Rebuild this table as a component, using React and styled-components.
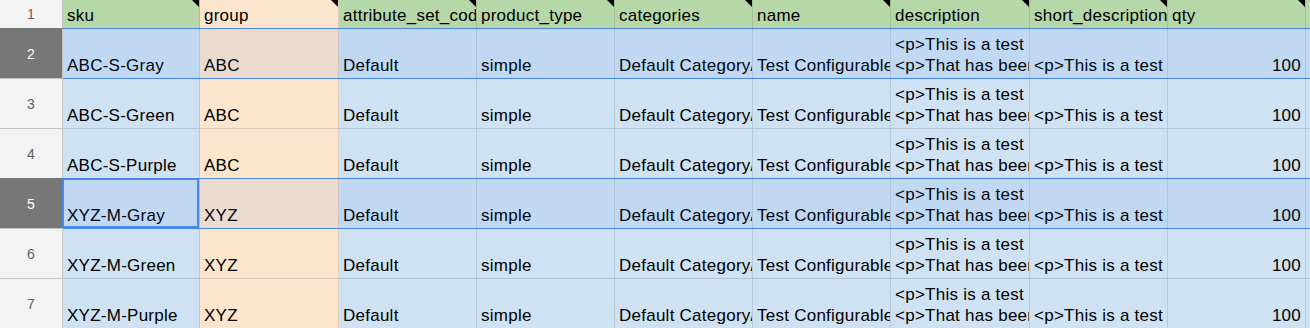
import React from 'react';
import styled, { createGlobalStyle, css } from 'styled-components';

const GlobalStyle = createGlobalStyle`
  body {
    margin: 0;
    background: #ffffff;
    overflow: hidden;
  }
`

const Sheet = styled.div`
  display: flex;
  flex-direction: column;
  width: 1310px;
  font-family: "Liberation Sans", Arial, sans-serif;
  font-size: 17px;
  color: #000;
`

const Row = styled.div`
  display: flex;
  height: ${p => p.$height}px;
  position: relative;
  ${p => p.$selected && css`
    &::after {
      content: '';
      position: absolute;
      left: 63px;
      right: 0;
      top: -1px;
      bottom: 0;
      border-top: 1px solid #4a86e8;
      border-bottom: 1px solid #4a86e8;
      background: rgba(26, 100, 232, 0.08);
      pointer-events: none;
    }
  `}
`

const RowNum = styled.div`
  width: 63px;
  flex: none;
  box-sizing: border-box;
  display: flex;
  align-items: center;
  justify-content: center;
  font-size: 14px;
  color: ${p => (p.$selected ? '#ffffff' : '#616161')};
  background: ${p => (p.$selected ? '#777777' : '#f3f3f3')};
  border-right: 1px solid #c4c4c4;
  border-bottom: 1px solid #c4c4c4;
  ${p => p.$selected && css`
    box-shadow: 0 -1px 0 #777777;
  `}
`

const tones = {
  green: '#b6d7a8',
  peach: '#fce5cd',
  blue: '#cfe2f3',
}

const Cell = styled.div`
  width: ${p => (p.$width ? `${p.$width}px` : 'auto')};
  flex: ${p => (p.$width ? 'none' : '1')};
  box-sizing: border-box;
  position: relative;
  display: flex;
  flex-direction: column;
  justify-content: flex-end;
  padding: 0 ${p => (p.$align === 'right' ? 4 : 0)}px 2px 4px;
  background: ${p => tones[p.$tone]};
  border-right: 1px solid rgba(0, 0, 0, 0.1);
  border-bottom: 1px solid rgba(0, 0, 0, 0.12);
  text-align: ${p => p.$align || 'left'};
  min-width: 0;
`

const HeadCell = styled(Cell)`
  &::after {
    content: '';
    position: absolute;
    top: 0;
    right: 0;
    width: 0;
    height: 0;
    border-top: 7px solid #000;
    border-left: 7px solid transparent;
  }
`

const Line = styled.div`
  line-height: 21px;
  white-space: pre;
  overflow: hidden;
  letter-spacing: 0.25px;
`

const ActiveFrame = styled.div`
  position: absolute;
  top: -1px;
  left: -1px;
  right: 0;
  bottom: 0;
  border: 2px solid #4a86e8;
  z-index: 2;
  pointer-events: none;
`

const columns = [
  { key: 'sku', width: 137, tone: 'blue', head: 'green' },
  { key: 'group', width: 139, tone: 'peach', head: 'peach' },
  { key: 'attribute_set_code', width: 138, tone: 'blue', head: 'green' },
  { key: 'product_type', width: 138, tone: 'blue', head: 'green' },
  { key: 'categories', width: 138, tone: 'blue', head: 'green' },
  { key: 'name', width: 138, tone: 'blue', head: 'green' },
  { key: 'description', width: 139, tone: 'blue', head: 'green' },
  { key: 'short_description', width: 138, tone: 'blue', head: 'green' },
  { key: 'qty', width: 138, tone: 'blue', head: 'green', align: 'right' },
]

const products = [
  { n: 2, sku: 'ABC-S-Gray', group: 'ABC', selected: true },
  { n: 3, sku: 'ABC-S-Green', group: 'ABC' },
  { n: 4, sku: 'ABC-S-Purple', group: 'ABC' },
  { n: 5, sku: 'XYZ-M-Gray', group: 'XYZ', selected: true, active: true },
  { n: 6, sku: 'XYZ-M-Green', group: 'XYZ' },
  { n: 7, sku: 'XYZ-M-Purple', group: 'XYZ' },
]

const common = {
  attribute_set_code: 'Default',
  product_type: 'simple',
  categories: 'Default Category/Gear',
  name: 'Test Configurable Product',
  description: '<p>This is a test configurable product</p>\n<p>That has been imported</p>',
  short_description: '<p>This is a test configurable product</p>',
  qty: '100',
}

function App() {
  return (
    <Sheet>
      <GlobalStyle />
      <Row $height={29}>
        <RowNum>1</RowNum>
        {columns.map(col => (
          <HeadCell key={col.key} $width={col.width} $tone={col.head}>
            <Line>{col.key}</Line>
          </HeadCell>
        ))}
        <Cell $tone="green" />
      </Row>
      {products.map(item => {
        const data = { ...common, ...item };
        return (
          <Row key={item.n} $height={50} $selected={item.selected}>
            <RowNum $selected={item.selected}>{item.n}</RowNum>
            {columns.map(col => (
              <Cell key={col.key} $width={col.width} $tone={col.tone} $align={col.align}>
                {data[col.key].split('\n').map((text, i) => (
                  <Line key={i}>{text}</Line>
                ))}
                {item.active && col.key === 'sku' && <ActiveFrame />}
              </Cell>
            ))}
            <Cell $tone="blue" />
          </Row>
        );
      })}
    </Sheet>
  );
}

export default App;
